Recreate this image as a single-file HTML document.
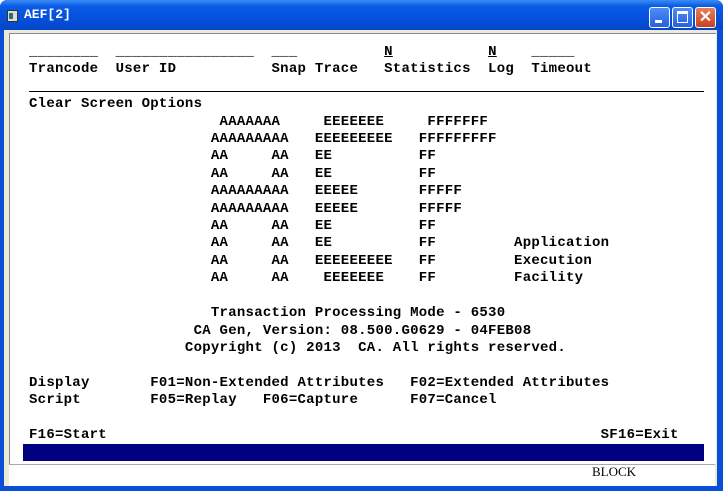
<!DOCTYPE html>
<html><head><style>
body{margin:0;width:723px;height:491px;overflow:hidden;background:#fff;position:relative;font-family:"Liberation Sans",sans-serif}
.frame{position:absolute;left:0;top:0;width:723px;height:491px;background:#0a4fd8;border-radius:7px 7px 0 0}
.title{position:absolute;left:0;top:0;width:723px;height:30px;border-radius:7px 7px 0 0;background:linear-gradient(#3d8cf5,#0a5ce6 20%,#0550dc 60%,#0447c8)}
.ttxt{position:absolute;left:24px;top:7px;color:#fff;font:bold 13px "Liberation Mono",monospace}
.ico{position:absolute;left:7px;top:10px;width:9px;height:10px;background:#ddd;border:1px solid #333}
.ico:after{content:"";position:absolute;left:1px;top:2px;width:4px;height:6px;background:#2a6f6f}
.btn{position:absolute;top:7px;width:19px;height:19px;border:1px solid #fff;border-radius:3px;background:linear-gradient(#4d8df8,#2660e0)}
.inner{position:absolute;left:4px;top:30px;width:713px;height:456px;background:#ece9d8}
.content{position:absolute;left:9px;top:33px;width:706px;height:430px;background:#fff;border-left:1px solid #888;border-top:1px solid #888}
.status{position:absolute;left:9px;top:464px;width:706px;height:21px;background:#fff;border-top:1px solid #aaa}
pre{position:absolute;left:29px;top:44px;margin:0;font:bold 14px/17.4px "Liberation Mono",monospace;letter-spacing:0.26px;color:#000}
u{text-decoration:underline}
</style></head><body>
<div class="frame"></div>
<div class="title"><div class="ico"></div><div class="ttxt">AEF[2]</div>
<div class="btn" style="left:649px"><div style="position:absolute;left:5px;top:12px;width:7px;height:3px;background:#fff"></div></div>
<div class="btn" style="left:672px"><div style="position:absolute;left:4px;top:3px;width:9px;height:8px;border:1px solid #fff;border-top:3px solid #fff"></div></div>
<div class="btn" style="left:695px;background:linear-gradient(#e8805c,#c8401e);color:#fff;font:bold 16px/19px 'Liberation Sans';text-align:center">✕</div>
</div>
<div class="inner"></div>
<div class="content"></div>
<div class="status"></div>
<div style="position:absolute;left:29px;top:91px;width:675px;height:1px;background:#000"></div>
<div style="position:absolute;left:23px;top:444px;width:681px;height:17px;background:#000080"></div>
<div style="position:absolute;left:592px;top:464px;font:13px 'Liberation Serif',serif;color:#000">BLOCK</div>
<pre>________  ________________  ___          <u>N</u>           <u>N</u>    _____
Trancode  User ID           Snap Trace   Statistics  Log  Timeout

Clear Screen Options
                      AAAAAAA     EEEEEEE     FFFFFFF
                     AAAAAAAAA   EEEEEEEEE   FFFFFFFFF
                     AA     AA   EE          FF
                     AA     AA   EE          FF
                     AAAAAAAAA   EEEEE       FFFFF
                     AAAAAAAAA   EEEEE       FFFFF
                     AA     AA   EE          FF
                     AA     AA   EE          FF         Application
                     AA     AA   EEEEEEEEE   FF         Execution
                     AA     AA    EEEEEEE    FF         Facility

                     Transaction Processing Mode - 6530
                   CA Gen, Version: 08.500.G0629 - 04FEB08
                  Copyright (c) 2013  CA. All rights reserved.

Display       F01=Non-Extended Attributes   F02=Extended Attributes
Script        F05=Replay   F06=Capture      F07=Cancel

F16=Start                                                         SF16=Exit</pre>
</body></html>
